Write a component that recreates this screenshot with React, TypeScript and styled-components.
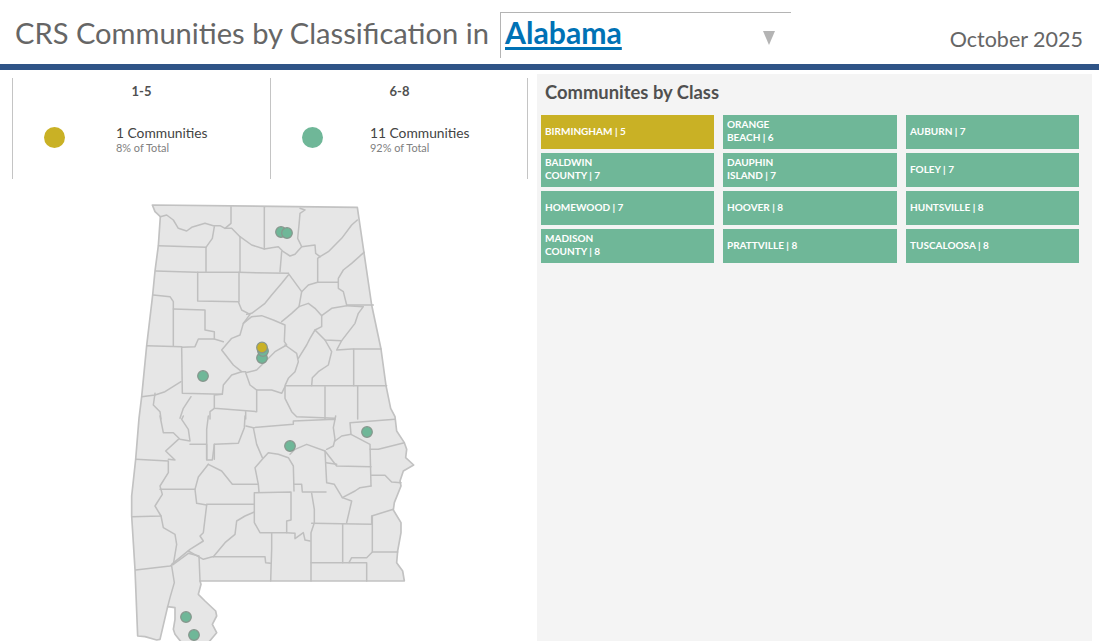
import styled, { createGlobalStyle } from 'styled-components'

const colors = {
  gold: '#c9b125',
  green: '#6fb798',
  navy: '#2f5487',
  text: '#666666',
  dark: '#505050',
  line: '#c4c4c4',
}

const GlobalStyle = createGlobalStyle`
  html, body {
    margin: 0;
    padding: 0;
    background: #fff;
    font-family: Lato, "Open Sans", sans-serif;
  }
`

const Page = styled.div`
  width: 1099px;
  height: 641px;
  overflow: hidden;
  display: flex;
  flex-direction: column;
`

const Header = styled.header`
  height: 64px;
  flex: none;
  display: flex;
  align-items: flex-start;
  border-bottom: 6px solid ${colors.navy};
`

const Title = styled.h1`
  margin: 14px 0 0 15px;
  width: 485px;
  font-size: 29.1px;
  line-height: 38px;
  font-weight: 400;
  color: ${colors.text};
  white-space: nowrap;
`

const Select = styled.div`
  margin-top: 12px;
  width: 291px;
  height: 46px;
  box-sizing: border-box;
  border-left: 1px solid #b4b4b4;
  border-top: 1px solid #b4b4b4;
  padding: 0 15px 0 4px;
  display: flex;
  justify-content: space-between;
  align-items: flex-start;
`

const SelectValue = styled.span`
  font-size: 30.2px;
  line-height: 38px;
  font-weight: 700;
  color: #0072b5;
  text-decoration: underline;
  text-underline-offset: 3px;
`

const Caret = styled.svg`
  margin-top: 17px;
  width: 14px;
  height: 16px;
  fill: #b4b4b4;
`

const DateLabel = styled.div`
  margin: 24px 16px 0 auto;
  font-size: 21.5px;
  line-height: 30px;
  color: ${colors.text};
`

const Body = styled.main`
  flex: 1;
  min-height: 0;
  display: flex;
`

const LeftColumn = styled.section`
  width: 537px;
  flex: none;
  padding: 8px 0 0 12px;
  box-sizing: border-box;
`

const StatRow = styled.div`
  display: flex;
  height: 101px;
  width: 516px;
  box-sizing: border-box;
  border-right: 1px solid ${colors.line};
`

const StatCard = styled.div`
  width: 258px;
  flex: none;
  box-sizing: border-box;
  border-left: 1px solid ${colors.line};
  padding-left: 31px;

  &:last-child {
    width: 257px;
  }
`

const StatHeading = styled.div`
  width: 195px;
  margin-top: 5px;
  text-align: center;
  font-size: 13px;
  line-height: 16px;
  font-weight: 700;
  color: ${colors.dark};
`

const StatBody = styled.div`
  margin-top: 25px;
  display: flex;
  align-items: flex-start;
`

const Swatch = styled.span<{ $color: string }>`
  width: 21px;
  height: 21px;
  margin-top: 3px;
  border-radius: 50%;
  background: ${({ $color }) => $color};
  flex: none;
`

const StatText = styled.div<{ $gap: number }>`
  margin: 1px 0 0 ${({ $gap }) => $gap}px;
`

const StatCount = styled.div`
  font-size: 13.8px;
  line-height: 15px;
  color: #444;
`

const StatShare = styled.div`
  margin-top: 1px;
  font-size: 10.9px;
  line-height: 14px;
  color: #808080;
`

const MapFigure = styled.svg`
  display: block;
  margin: 16px 0 0 113px;
  width: 300px;
  height: 446px;
  overflow: visible;
`

const StatePath = styled.polygon`
  fill: #e6e6e6;
  stroke: #c2c2c2;
  stroke-width: 5;
  stroke-linejoin: round;
`

const CountyLine = styled.polyline`
  fill: none;
  stroke: #bfbfbf;
  stroke-width: 4.5;
  stroke-linejoin: round;
  stroke-linecap: round;
`

const Pin = styled.circle<{ $color: string }>`
  fill: ${({ $color }) => $color};
  stroke: #87968d;
  stroke-width: 3.5;
`

const ClassPanel = styled.section`
  margin: 4px 0 0 0;
  width: 555px;
  background: #f4f4f4;
  padding: 6px 13px 0 4px;
  box-sizing: border-box;
`

const PanelTitle = styled.h2`
  margin: 0 0 11px 4px;
  font-size: 18.4px;
  line-height: 24px;
  font-weight: 700;
  color: ${colors.dark};
`

const TileGrid = styled.div`
  display: grid;
  grid-template-columns: 173px 174px 173px;
  grid-auto-rows: 34px;
  column-gap: 9px;
  row-gap: 4px;
`

const Tile = styled.div<{ $color: string }>`
  background: ${({ $color }) => $color};
  color: #fff;
  font-size: 10px;
  line-height: 13px;
  font-weight: 700;
  padding: 0 0 2px 4px;
  box-sizing: border-box;
  display: flex;
  flex-direction: column;
  justify-content: center;
`

const TileLine = styled.span`
  display: block;
  white-space: nowrap;
`

const tiles = [
  { lines: ['BIRMINGHAM | 5'], color: colors.gold },
  { lines: ['ORANGE', 'BEACH | 6'], color: colors.green },
  { lines: ['AUBURN | 7'], color: colors.green },
  { lines: ['BALDWIN', 'COUNTY | 7'], color: colors.green },
  { lines: ['DAUPHIN', 'ISLAND | 7'], color: colors.green },
  { lines: ['FOLEY | 7'], color: colors.green },
  { lines: ['HOMEWOOD | 7'], color: colors.green },
  { lines: ['HOOVER | 8'], color: colors.green },
  { lines: ['HUNTSVILLE | 8'], color: colors.green },
  { lines: ['MADISON', 'COUNTY | 8'], color: colors.green },
  { lines: ['PRATTVILLE | 8'], color: colors.green },
  { lines: ['TUSCALOOSA | 8'], color: colors.green },
]

// map coordinates are 3x page pixels, origin at 125,195
const outline =
  '82,30 90,50 106,65 100,152 90,228 83,300 65,452 50,605 42,670 32,793 20,903 20,963 30,1123 38,1323 60,1325 95,1335 105,1333 112,1303 128,1235 150,1238 150,1273 145,1303 150,1318 170,1343 250,1343 275,1313 262,1288 275,1263 272,1248 240,1218 220,1198 228,1168 225,1158 838,1158 833,1128 815,1103 818,1068 828,1013 828,983 805,945 808,923 828,873 825,858 835,828 866,810 842,788 845,763 838,743 815,708 810,665 797,640 783,572 768,462 740,330 697,37'

const northLines = [
  '106,65 125,60 145,75 160,100 185,108 200,97 240,85 265,92 285,92 300,100 320,100 345,125 380,150 418,162 440,158 460,155 475,170 495,183 510,178 530,155 570,150 572,175 585,185',
  '318,35 318,85 300,100',
  '418,37 418,162',
  '525,40 540,45 525,55 522,90 518,130 530,155',
  '585,185 610,170 650,130 680,90 697,75',
  '100,152 243,157 243,230',
  '243,157 262,130 268,95',
  '345,125 345,230',
  '92,228 215,232 340,232 490,235',
  '470,170 465,230',
  '585,185 578,190 578,262 640,262 640,250 655,225 680,205 717,172',
  '490,235 530,290 550,270 578,262',
  '530,290 522,335 500,355 470,380',
  '490,240 470,265 440,300 420,325 380,355 365,358',
  '218,232 218,318 340,320 350,345 375,358 355,385 345,420 320,430 290,465 325,510 350,530 362,530',
  '342,232 342,320',
  '640,262 640,280 655,290 665,330 745,330',
  '665,332 620,340 590,362 570,340 550,325 522,335',
  '85,300 135,305 145,320 145,452',
  '145,342 240,345 240,405 268,410 268,432 295,440',
  '65,452 170,455 172,595 292,598 295,570 320,540 350,530',
  '170,457 210,455 220,432 268,432',
  '355,385 380,365 410,362 445,375 480,390 478,440 485,450 450,470 420,500 395,525 362,533 375,570 395,585 440,585 470,595 480,575',
  '480,450 515,475 520,500 510,530 490,550 480,572 785,572',
  '570,405 600,435 650,437 635,465 680,462 768,462',
  '686,462 686,572',
  '650,437 690,385 700,355 715,335 665,332',
  '590,362 590,395 570,405 555,430 545,450 520,490',
  '600,435 620,470 610,510 580,530 562,548 560,572',
  '480,575 480,610 500,650 515,665 630,670',
  '600,575 600,672',
  '698,572 698,672',
  '292,598 268,600 268,640 395,650 395,585',
  '268,640 255,650 255,672',
  '362,650 362,672',
  '50,605 90,600 120,590 168,560',
  '90,595 85,630 105,650 108,672',
  '198,605 175,640 165,670',
]

const southLines = [
  '105,0 115,50 145,50 165,70 195,75 190,40 170,10 175,0',
  '195,85 245,85 245,132 262,132 268,85',
  '250,0 245,40 245,130',
  '360,0 358,35 340,82 268,85 268,130',
  '32,130 130,135 130,170 105,210 112,235 90,270 108,300 22,302',
  '130,130 150,132 122,105 160,70',
  '105,220 210,220',
  '250,145 220,183 210,220 215,262 245,267',
  '250,145 290,165 322,205 400,205 402,228',
  '245,265 388,265',
  '245,267 235,350 225,360 235,375 195,400 140,445',
  '108,300 115,335 150,355 155,385 145,445 135,450 32,462',
  '140,450 148,500 135,545 128,572',
  '145,445 190,412 222,420 225,495',
  '190,405 235,430 262,422 420,422 422,440 437,442',
  '265,422 300,380 330,355 335,315 360,300 388,288',
  '388,230 498,228 498,312 485,315 485,350 405,350 388,320 388,230',
  '400,205 390,155 412,130 430,110 460,115 490,125 505,150 507,225',
  '363,30 385,35 395,85 412,125',
  '385,35 505,25 505,15 630,10 625,35 630,70 625,90 605,100',
  '495,115 510,100 545,85 600,105 635,150 738,152',
  '632,0 630,10',
  '600,105 605,200 628,205 652,245 690,225 705,215 738,210',
  '508,205 530,205 532,228 603,228',
  '603,140 635,145',
  '810,10 675,20 678,55 735,85 738,210',
  '678,55 650,60 630,75',
  '735,100 760,100 838,80',
  '738,178 780,178 800,198 828,200',
  '560,232 568,280 568,320 558,350 558,495',
  '560,322 740,325',
  '653,325 653,440',
  '740,325 740,300 805,280',
  '742,300 742,408 818,408',
  '742,408 725,425 680,425 672,440',
  '558,440 725,440 725,495',
  '440,350 440,400 437,495',
  '652,245 680,255 665,320',
  '485,350 510,352 510,368 535,350 540,372 555,375',
]

// drawn in order, gold sits over the green Homewood and Hoover pins
const pins = [
  { x: 281, y: 232, color: colors.green },
  { x: 287, y: 233, color: colors.green },
  { x: 262, y: 358, color: colors.green },
  { x: 263, y: 351, color: colors.green },
  { x: 262, y: 347.5, color: colors.gold },
  { x: 203, y: 376, color: colors.green },
  { x: 290, y: 446, color: colors.green },
  { x: 367, y: 432, color: colors.green },
  { x: 186, y: 617, color: colors.green },
  { x: 194, y: 635, color: colors.green },
]

const App = () => (
  <Page>
    <GlobalStyle />
    <Header>
      <Title>CRS Communities by Classification in</Title>
      <Select>
        <SelectValue>Alabama</SelectValue>
        <Caret viewBox="0 0 14 16">
          <polygon points="1,1 13,1 7,15" />
        </Caret>
      </Select>
      <DateLabel>October 2025</DateLabel>
    </Header>
    <Body>
      <LeftColumn>
        <StatRow>
          <StatCard>
            <StatHeading>1-5</StatHeading>
            <StatBody>
              <Swatch $color={colors.gold} />
              <StatText $gap={51}>
                <StatCount>1 Communities</StatCount>
                <StatShare>8% of Total</StatShare>
              </StatText>
            </StatBody>
          </StatCard>
          <StatCard>
            <StatHeading>6-8</StatHeading>
            <StatBody>
              <Swatch $color={colors.green} />
              <StatText $gap={47}>
                <StatCount>11 Communities</StatCount>
                <StatShare>92% of Total</StatShare>
              </StatText>
            </StatBody>
          </StatCard>
        </StatRow>
        <MapFigure viewBox="0 0 900 1338">
          <StatePath points={outline} />
          {northLines.map((points) => (
            <CountyLine key={points} points={points} />
          ))}
          <g transform="translate(0 663)">
            {southLines.map((points) => (
              <CountyLine key={points} points={points} />
            ))}
          </g>
          {pins.map((pin) => (
            <Pin
              key={`${pin.x}-${pin.y}`}
              cx={(pin.x - 125) * 3}
              cy={(pin.y - 195) * 3}
              r={16}
              $color={pin.color}
            />
          ))}
        </MapFigure>
      </LeftColumn>
      <ClassPanel>
        <PanelTitle>Communites by Class</PanelTitle>
        <TileGrid>
          {tiles.map((tile) => (
            <Tile key={tile.lines.join(' ')} $color={tile.color}>
              {tile.lines.map((line) => (
                <TileLine key={line}>{line}</TileLine>
              ))}
            </Tile>
          ))}
        </TileGrid>
      </ClassPanel>
    </Body>
  </Page>
)

export default App
